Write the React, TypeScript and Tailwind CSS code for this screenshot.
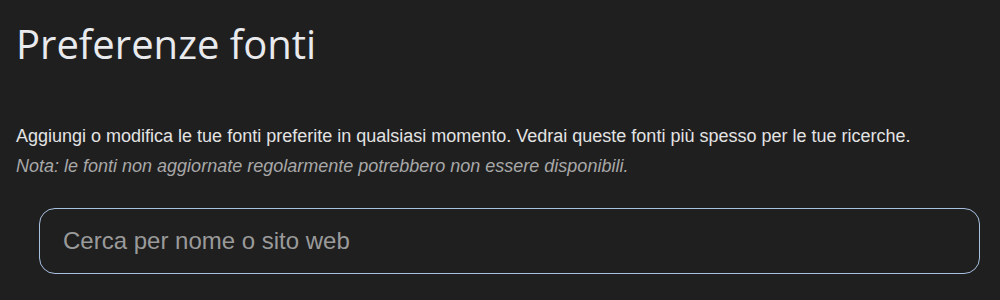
export default function App() {
  return (
    <div className="h-[300px] w-[1000px] overflow-hidden bg-[#1f1f1f] px-4">
      <h1 className="pt-[18px] font-['Open_Sans',sans-serif] text-[40px] leading-[52px] text-[#e8eaed]">
        Preferenze fonti
      </h1>
      <div className="mt-[51px] font-['Liberation_Sans',Arial,sans-serif] text-[18px]">
        <p className="leading-[30px] text-[#e3e3e3]">
          Aggiungi o modifica le tue fonti preferite in qualsiasi momento. Vedrai queste fonti più spesso per le tue ricerche.
        </p>
        <p className="leading-[30px] italic text-[#a8a8a8]">
          Nota: le fonti non aggiornate regolarmente potrebbero non essere disponibili.
        </p>
      </div>
      <div className="mt-[27px] pl-[23px] pr-[4px]">
        <input
          type="text"
          placeholder="Cerca per nome o sito web"
          className="h-[66px] w-full rounded-[16px] border border-[#a8c0e0] bg-transparent px-[23px] font-['Liberation_Sans',Arial,sans-serif] text-[24px] text-[#e3e3e3] outline-none placeholder:text-[#9a9a9a]"
        />
      </div>
    </div>
  );
}
